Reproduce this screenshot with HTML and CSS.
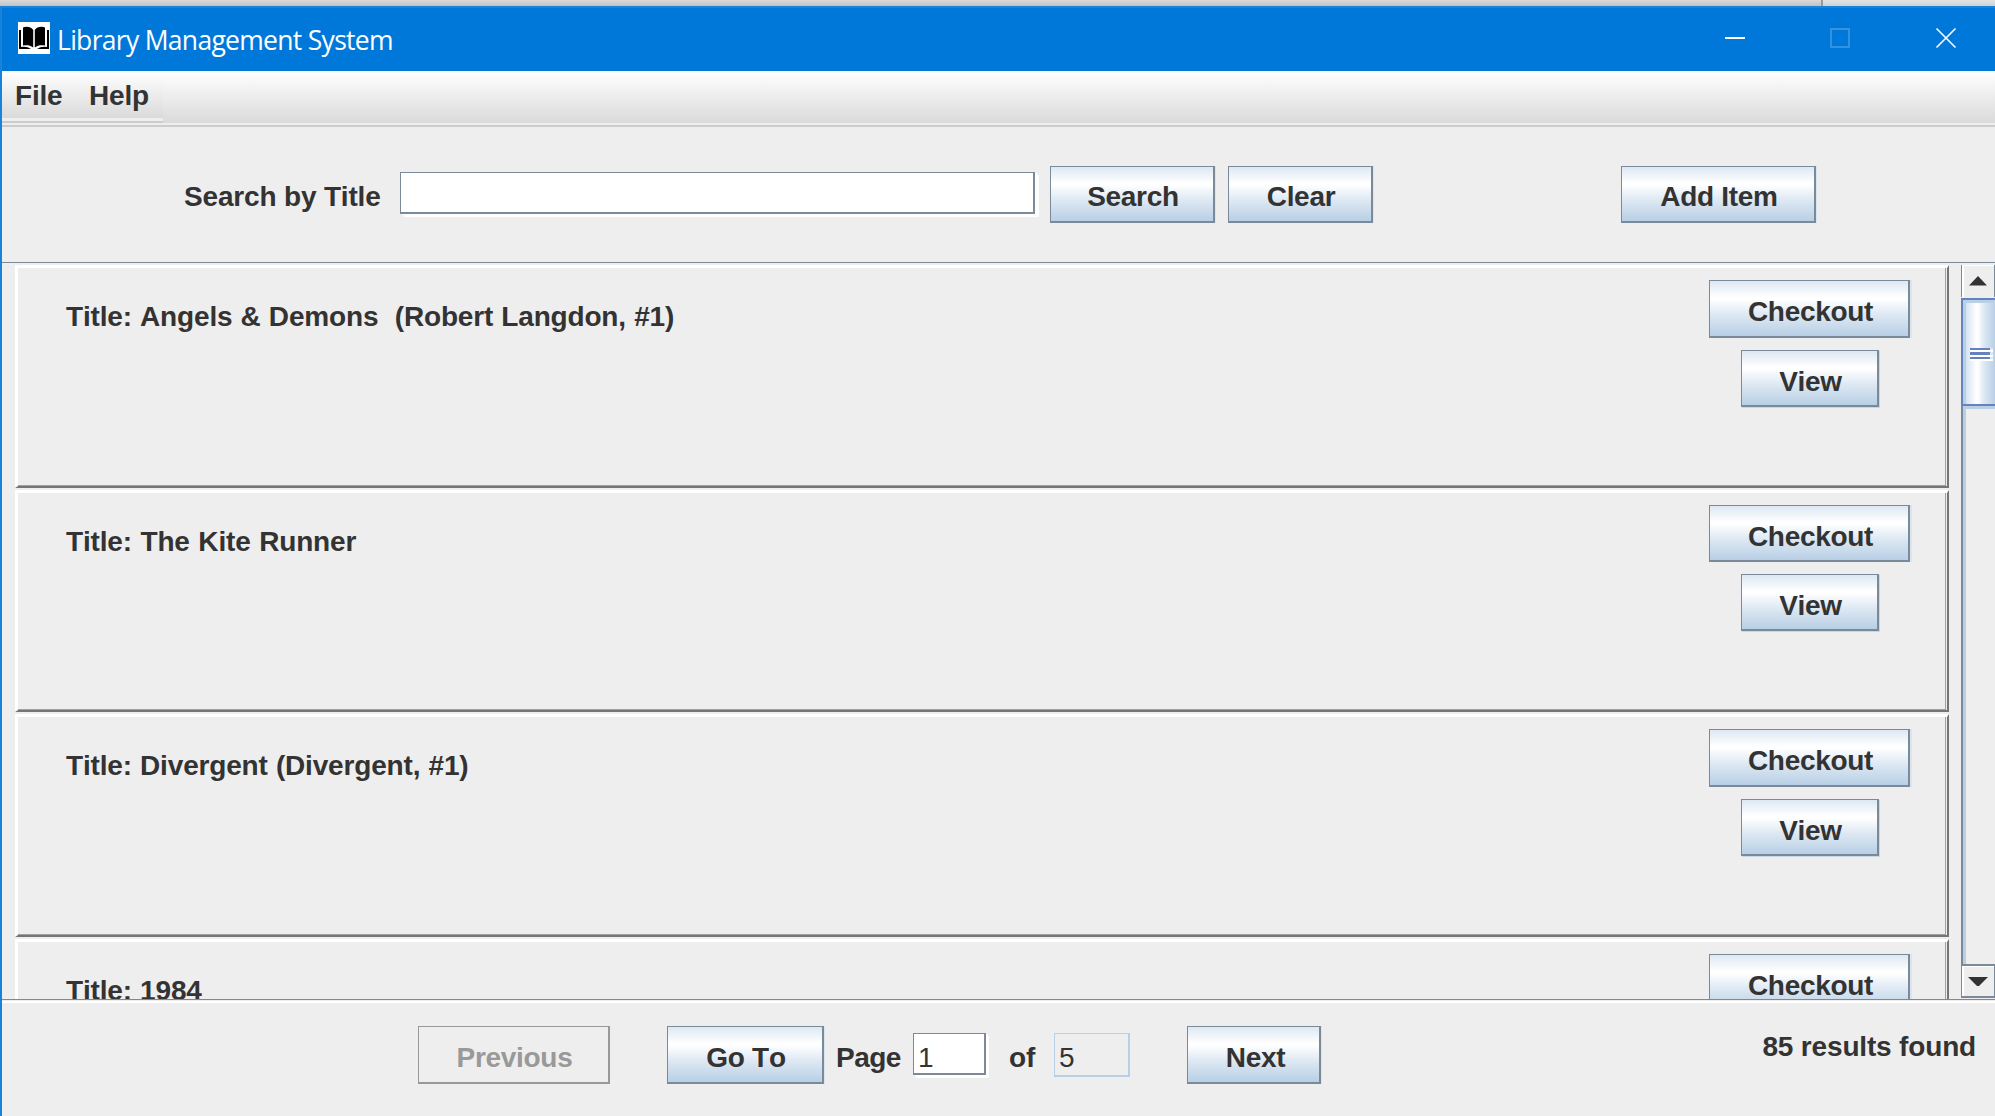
FILE: index.html
```html
<!DOCTYPE html>
<html lang="en">
<head>
<meta charset="utf-8">
<title>Library Management System</title>
<link rel="stylesheet" href="styles.css">
</head>
<body>
<div class="desktop"><div class="desktop-left"></div><div class="desktop-right"></div></div>
<div class="window">
  <header class="titlebar">
    <svg class="app-icon" viewBox="0 0 32 32" width="32" height="32">
      <rect width="32" height="32" fill="#fff"/>
      <path d="M5 5.500C9 4 13 5 15.200 8V25.500C12 23 9 23 5 23.500zM27 5.500C23 4 19 5 16.800 8V25.500C20 23 23 23 27 23.500z" fill="#000"/>
      <path d="M1 8H3V25Q9 24 13 27H1zM31 8H29V25Q23 24 19 27H31z" fill="#000"/>
    </svg>
    <span class="app-title">Library Management System</span>
    <svg class="controls" viewBox="0 0 240 30" width="240" height="30">
      <path d="M5 15H25" stroke="#fff" stroke-width="2"/>
      <rect x="111" y="6" width="18" height="18" fill="none" stroke="#3393e0" stroke-width="2"/>
      <path d="M216.500 5.500L235.500 24.500M235.500 5.500L216.500 24.500" stroke="#fff" stroke-width="1.600"/>
    </svg>
  </header>
  <nav class="menubar"><div class="menus"><span class="menu file">File</span><span class="menu">Help</span></div></nav>
  <section class="toolbar">
    <span class="label search-label">Search by Title</span>
    <div class="field search-field"></div>
    <div class="btn search">Search</div>
    <div class="btn clear">Clear</div>
    <div class="btn add">Add Item</div>
  </section>
  <main class="pane">
    <div class="list">
      <article class="item"><span class="item-title">Title: Angels &amp; Demons&nbsp; (Robert Langdon, #1)</span><div class="actions"><div class="btn checkout">Checkout</div><div class="btn view">View</div></div></article>
      <article class="item short"><span class="item-title">Title: The Kite Runner</span><div class="actions"><div class="btn checkout">Checkout</div><div class="btn view">View</div></div></article>
      <article class="item"><span class="item-title">Title: Divergent (Divergent, #1)</span><div class="actions"><div class="btn checkout">Checkout</div><div class="btn view">View</div></div></article>
      <article class="item"><span class="item-title">Title: 1984</span><div class="actions"><div class="btn checkout">Checkout</div></div></article>
    </div>
    <div class="scrollbar">
      <div class="arrow up"><svg viewBox="0 0 20 10" width="20" height="10"><path d="M1 9.500L10 0L19 9.500z" fill="#333"/></svg></div>
      <div class="thumb"><i></i><i class="mid"></i><i></i></div>
      <div class="track"></div>
      <div class="arrow down"><svg viewBox="0 0 20 10" width="20" height="10"><path d="M0 0H20L11 9H9z" fill="#333"/></svg></div>
    </div>
  </main>
  <footer class="footer">
    <div class="btn disabled previous">Previous</div>
    <div class="btn goto">Go To</div>
    <span class="label page-label">Page</span>
    <div class="field page-field">1</div>
    <span class="label of-label">of</span>
    <div class="field total-field">5</div>
    <div class="btn next">Next</div>
    <span class="label results">85 results found</span>
  </footer>
</div>
</body>
</html>
```
FILE: styles.css
```css
* { box-sizing: border-box; }
body {
  margin: 0;
  height: 1116px;
  overflow: hidden;
  display: flex;
  flex-direction: column;
  background: #eee;
  color: #333;
  font: bold 28px/32px "Liberation Sans", Arial, sans-serif;
  font-kerning: none;
  letter-spacing: -0.17px;
  white-space: nowrap;
}
.desktop { height: 6px; flex: none; display: flex; }
.desktop-left { width: 1823px; border-right: 2px solid #989898; background: linear-gradient(#dadada, #c2c2c2); }
.desktop-right { flex: 1; background: linear-gradient(#e3e4e6, #d0d1d3); }
.window { flex: 1; display: flex; flex-direction: column; border-left: 2px solid #1883d9; min-height: 0; }

.titlebar { height: 65px; flex: none; display: flex; background: #0078d9; border-top: 2px solid #1883d9; }
.app-icon { margin: 14px 0 0 16px; }
.app-title { margin: 14px 0 0 7px; font: 26.5px/36px "Open Sans", sans-serif; letter-spacing: -0.7px; color: #fff; }
.controls { margin: 15px 35px 0 auto; }

.menubar { height: 56px; flex: none; background: linear-gradient(#fff, #dadada) 0 0 / 100% 52px no-repeat #eee; border-bottom: 2px solid #ccc; }
.menus { width: 161px; height: 52px; display: flex; padding: 9px 0 0 13px; background: linear-gradient(#fff, #dadada) 0 0 / 100% 47px no-repeat #eee; border-bottom: 2px solid #ccc; letter-spacing: -0.2px; }
.file { width: 74px; }

.toolbar { height: 136px; flex: none; display: flex; padding-top: 39px; border-bottom: 1px solid #7a8a99; }
.label { display: block; }
.search-label { width: 216px; margin: 15px 0 0 182px; }

.btn {
  display: flex;
  justify-content: center;
  flex: none;
  height: 57px;
  padding: 14px 0 0 2px;
  letter-spacing: -0.3px;
  border: 1px solid #7a8a99;
  border-right-width: 2px;
  border-bottom-width: 2px;
  background: linear-gradient(#dde8f3 0, #fff 30%, #fff 33%, #dde8f3 62%, #b8cfe5 100%);
  box-shadow: 1px 0 #dbe5ef;
}
.search { width: 165px; margin-left: 11px; }
.clear { width: 145px; margin-left: 13px; }
.add { width: 195px; margin-left: 248px; }

.field { flex: none; border: 1px solid #7a8a99; border-right-width: 2px; border-bottom-width: 2px; background: #fff; font-weight: normal; }
.search-field { width: 635px; height: 42px; margin: 6px 4px 0 0; box-shadow: 2px 1px #fff, 4px 3px #fff; }

.pane { height: 736px; flex: none; display: flex; overflow: hidden; padding: 2px 0 0 13px; }
.list { width: 1934px; flex: none; }
.item {
  height: 223px;
  margin-bottom: 2px;
  display: flex;
  justify-content: space-between;
  border: 3px solid #fff;
  border-right: 2px solid #757575;
  border-bottom: 2px solid #757575;
  box-shadow: inset -1px 0 #eee, inset -2px -1px #a0a0a0;
}
.item.short { height: 222px; }
.item-title { margin: 33px 0 0 48px; word-spacing: 0.6px; }
.short .item-title { word-spacing: 1px; }
.actions { width: 201px; margin: 12px 37px 0 0; display: flex; flex-direction: column; align-items: center; gap: 12px; }
.actions .btn { padding-top: 15px; padding-left: 3px; }
.checkout { width: 201px; height: 58px; box-shadow: 2px 0 #dbe5ef; }
.short .checkout { height: 57px; }
.view { width: 138px; box-shadow: 1px 1px #c9d7e5; }

.scrollbar { width: 34px; height: 734px; margin-left: 12px; flex: none; display: flex; flex-direction: column; }
.arrow { flex: none; border: solid #7a8a99; border-width: 0 1px; box-shadow: inset 2px 1px #fff; }
.up { height: 32px; padding: 11px 0 0 6px; }
.down { height: 34px; padding: 11px 0 0 6px; border-top-width: 2px; border-bottom-width: 2px; margin-bottom: 1px; }
.arrow svg { display: block; }
.thumb { height: 108px; flex: none; margin-top: 1px; padding: 48px 0 0 7px; border: 2px solid #6382bf; border-right: 0; background: linear-gradient(90deg, #c8d9eb, #fff 42%, #fff 46%, #dde8f3 65%, #b8cfe5); box-shadow: inset 3px 3px #b8cfe5; }
.thumb i { display: block; width: 20px; height: 2px; margin-bottom: 2px; background: #6382bf; box-shadow: 3px 0 #dde8f3, 3px 2px #fff, 0 2px #fff; }
.thumb .mid { height: 3px; }
.track { flex: 1; border-left: 2px solid #7a8a99; box-shadow: inset 3px 3px #b8cfe5; }

.footer { flex: 1; display: flex; padding: 23px 0 0 416px; border-top: 1px solid #7a8a99; box-shadow: inset 0 1px #eee, inset 0 3px #fff; }
.footer .btn { height: 58px; margin-top: 3px; padding-top: 15px; }
.previous { width: 192px; }
.btn.disabled { color: #999; border-color: #999; background: #eee; box-shadow: none; }
.goto { width: 157px; margin-left: 57px; }
.next { width: 134px; margin-left: 57px; }
.footer .next { padding-left: 4px; }
.footer .label { margin-top: 19px; }
.footer .page-label { width: 77px; margin-left: 12px; letter-spacing: -0.5px; }
.page-field { width: 73px; height: 42px; margin-top: 10px; padding: 8px 0 0 4px; box-shadow: 2px 1px #fff, 3px 3px #fff; }
.footer .of-label { width: 45px; margin-left: 23px; }
.total-field { width: 76px; height: 44px; margin-top: 10px; padding: 8px 0 0 4px; background: #eee; border-color: #b8cfe5; }
.footer .results { margin: 8px 19px 0 auto; }
```
